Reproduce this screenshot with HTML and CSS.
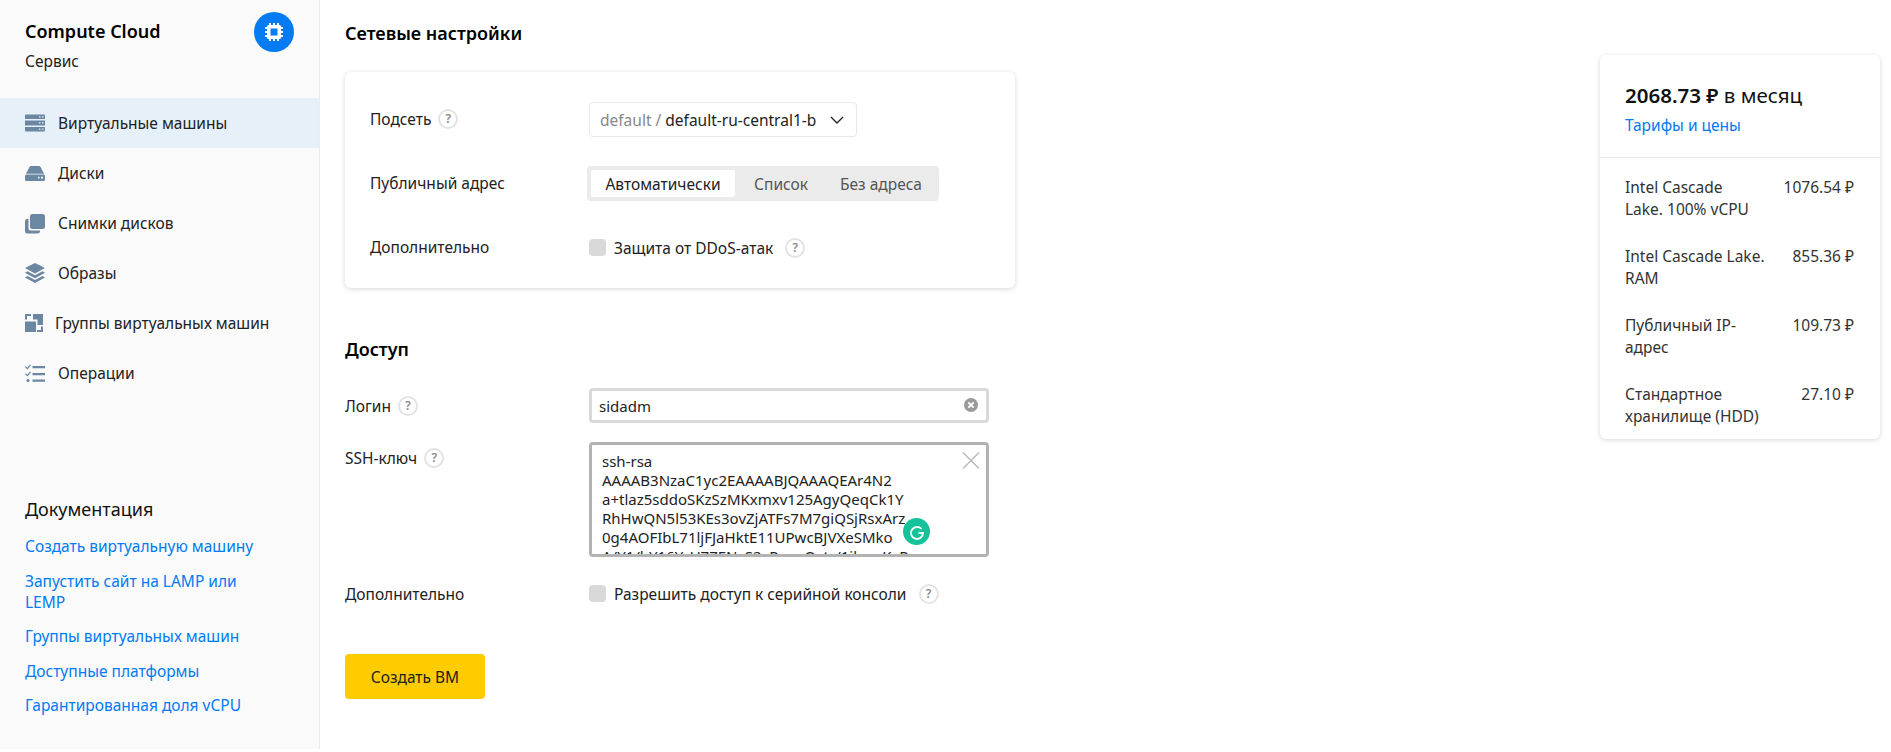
FILE: index.html
```html
<!DOCTYPE html>
<html lang="ru">
<head>
<meta charset="utf-8">
<title>Compute Cloud</title>
<link rel="stylesheet" href="styles.css">
</head>
<body>
<div class="page">
  <aside class="sidebar">
    <header class="brand">
      <div class="brand-text">
        <div class="brand-title">Compute Cloud</div>
        <div class="brand-sub">Сервис</div>
      </div>
      <div class="brand-icon">
        <svg width="20" height="20" viewBox="0 0 20 20"><path fill="#fff" fill-rule="evenodd" d="M5 1h2v2h2V1h2v2h2V1h2v2h.5A1.500 1.500 0 0 1 17 4.500V5h2v2h-2v2h2v2h-2v2h2v2h-2v.5a1.500 1.500 0 0 1-1.500 1.500H15v2h-2v-2h-2v2H9v-2H7v2H5v-2h-.5A1.500 1.500 0 0 1 3 15.500V15H1v-2h2v-2H1V9h2V7H1V5h2v-.5A1.500 1.500 0 0 1 4.500 3H5V1Zm1.500 5.500v7h7v-7h-7Z"/></svg>
      </div>
    </header>
    <nav class="nav">
      <a class="nav-item active">
        <svg class="nav-icon" viewBox="0 0 20 20"><path fill-rule="evenodd" d="M1 1.500h18a1 1 0 0 1 1 1v3.500H0V2.500a1 1 0 0 1 1-1Zm-1 6h20v5H0v-5Zm0 6.500h20v3.500a1 1 0 0 1-1 1H1a1 1 0 0 1-1-1V14ZM14 3.300v1.100h1.500V3.300H14Zm3 0v1.100h1.500V3.300H17Zm-3 6v1.200h1.500V9.300H14Zm3 0v1.200h1.500V9.300H17Zm-3 6.300v1.100h1.500v-1.100H14Zm3 0v1.100h1.500v-1.100H17Z"/></svg>
        <span>Виртуальные машины</span>
      </a>
      <a class="nav-item">
        <svg class="nav-icon" viewBox="0 0 20 20"><path fill-rule="evenodd" d="M6.500 3h7c.9 0 1.700.5 2.200 1.300L19 10.800H1l3.300-6.500C4.800 3.500 5.600 3 6.500 3ZM1.500 11.600h17a1.500 1.500 0 0 1 1.500 1.500v3.400a1.500 1.500 0 0 1-1.500 1.500h-17A1.500 1.500 0 0 1 0 16.500v-3.400a1.500 1.500 0 0 1 1.500-1.500Zm11.500 2.100v1.800h1.500v-1.800H13Zm3 0v1.800h2v-1.800h-2Z"/></svg>
        <span>Диски</span>
      </a>
      <a class="nav-item">
        <svg class="nav-icon copies" viewBox="0 0 20 20"><rect x="5" y="1" width="15" height="15" rx="2.500"/><path d="M3.500 6v9.500a2 2 0 0 0 2 2H15v.5a2.500 2.500 0 0 1-2.500 2.500h-10A2.500 2.500 0 0 1 0 18V8.500A2.500 2.500 0 0 1 3.500 6Z"/></svg>
        <span>Снимки дисков</span>
      </a>
      <a class="nav-item">
        <svg class="nav-icon" viewBox="0 0 20 20"><path d="M10 0l10 5-10 5.500L0 5l10-5Z"/><path d="M2.500 8.300 10 12.300l7.500-4L20 9.800l-10 5.400L0 9.800l2.500-1.500Z"/><path d="M2.500 13 10 17l7.500-4 2.500 1.500L10 20 0 14.500 2.500 13Z"/></svg>
        <span>Образы</span>
      </a>
      <a class="nav-item groups">
        <svg class="nav-icon small" viewBox="0 0 18 18"><path d="M8 0h10v11h-5.500V5.500H8Z"/><path d="M0 7.500h11V18H0Z"/><path d="M0 0h6v2H2v3.500H0Z"/><path d="M16 12.500h2V18h-6v-2h4Z"/></svg>
        <span>Группы виртуальных машин</span>
      </a>
      <a class="nav-item">
        <svg class="nav-icon" viewBox="0 0 20 20"><path d="M7.500 3h12.500v2.200H7.500zM7.500 10h12.500v2.200H7.500zM7.500 16.500h12.500v2.200H7.500z"/><path d="M.8 3.300 2.300 4.700 5 1.500 6 2.300 2.500 6.500 0 4.200ZM.8 10.300 2.300 11.700 5 8.500 6 9.300 2.500 13.500 0 11.200Z"/><circle cx="3" cy="17.500" r="1.600"/></svg>
        <span>Операции</span>
      </a>
    </nav>
    <section class="docs">
      <h3 class="docs-title">Документация</h3>
      <a class="docs-link">Создать виртуальную машину</a>
      <a class="docs-link">Запустить сайт на LAMP или LEMP</a>
      <a class="docs-link">Группы виртуальных машин</a>
      <a class="docs-link">Доступные платформы</a>
      <a class="docs-link">Гарантированная доля vCPU</a>
    </section>
  </aside>

  <main class="main">
    <h2 class="section-title first">Сетевые настройки</h2>
    <section class="card">
      <div class="row">
        <div class="label">Подсеть <span class="help">?</span></div>
        <div class="select"><span class="muted">default /</span>&nbsp;default-ru-central1-b
          <svg class="chevron" width="14" height="8" viewBox="0 0 14 8"><path d="M1 1l6 6 6-6" fill="none" stroke="#222" stroke-width="1.300"/></svg>
        </div>
      </div>
      <div class="row">
        <div class="label">Публичный адрес</div>
        <div class="segments">
          <span class="segment selected">Автоматически</span>
          <span class="segment">Список</span>
          <span class="segment">Без адреса</span>
        </div>
      </div>
      <div class="row">
        <div class="label">Дополнительно</div>
        <div class="check"><span class="box"></span>Защита от DDoS-атак <span class="help check-help">?</span></div>
      </div>
    </section>

    <h2 class="section-title access">Доступ</h2>
    <div class="form-row login-row">
      <div class="flabel">Логин <span class="help">?</span></div>
      <div class="input">sidadm
        <svg class="clear" width="16" height="16" viewBox="0 0 16 16"><circle cx="8" cy="8" r="7" fill="#9a9a9a"/><path d="M5.300 5.300l5.400 5.400m0-5.400l-5.400 5.400" stroke="#fff" stroke-width="1.800"/></svg>
      </div>
    </div>
    <div class="form-row ssh-row">
      <div class="flabel">SSH-ключ <span class="help">?</span></div>
      <div class="textarea">
        <div class="textarea-text">ssh-rsa
AAAAB3NzaC1yc2EAAAABJQAAAQEAr4N2
a+tlaz5sddoSKzSzMKxmxv125AgyQeqCk1Y
RhHwQN5l53KEs3ovZjATFs7M7giQSjRsxArz
0g4AOFIbL71ljFJaHktE11UPwcBJVXeSMko
A/Y1/bY16YcU77ENcS2yPzwsOvtr/1ikmzKvP</div>
        <svg class="close" width="18" height="17" viewBox="0 0 18 17"><path d="M1 .5l16 16m0-16l-16 16" stroke="#b5b5b5" stroke-width="1.200"/></svg>
        <div class="grammarly">
          <svg width="16" height="16" viewBox="0 0 16 16"><path d="M12.500 5A6 6 0 1 0 14 9H9.500" fill="none" stroke="#fff" stroke-width="1.800"/></svg>
        </div>
      </div>
    </div>
    <div class="form-row extra-row">
      <div class="flabel">Дополнительно</div>
      <div class="check"><span class="box"></span>Разрешить доступ к серийной консоли <span class="help check-help">?</span></div>
    </div>
    <button class="create">Создать ВМ</button>
  </main>

  <aside class="price">
    <div class="price-head">
      <div class="price-total"><b>2068.73 ₽</b> в месяц</div>
      <a class="price-link">Тарифы и цены</a>
    </div>
    <div class="price-list">
      <div class="price-row"><span class="price-name">Intel Cascade Lake. 100% vCPU</span><span class="price-value">1076.54 ₽</span></div>
      <div class="price-row"><span class="price-name">Intel Cascade Lake. RAM</span><span class="price-value">855.36 ₽</span></div>
      <div class="price-row"><span class="price-name">Публичный IP-адрес</span><span class="price-value">109.73 ₽</span></div>
      <div class="price-row"><span class="price-name">Стандартное хранилище (HDD)</span><span class="price-value">27.10 ₽</span></div>
    </div>
  </aside>
</div>
</body>
</html>
```

FILE: styles.css
```css
* { box-sizing: border-box; }
html, body { margin: 0; padding: 0; background: #fff; }
body {
  font-family: "Noto Sans", "Open Sans", "Liberation Sans", sans-serif;
  font-size: 15.5px;
  line-height: 20px;
  color: #222;
  height: 752px;
  overflow: hidden;
}
.page { display: flex; height: 749px; }

.sidebar {
  width: 320px;
  flex: none;
  background: #fafafa;
  border-right: 1px solid #ececec;
  display: flex;
  flex-direction: column;
  padding-top: 12px;
}
.brand { display: flex; justify-content: space-between; padding: 0 25px; height: 86px; }
.brand-title { font-size: 18px; font-weight: 600; color: #000; line-height: 22px; margin-top: 8px; }
.brand-sub { margin-top: 9px; line-height: 20px; }
.brand-icon {
  width: 40px; height: 40px; border-radius: 50%;
  background: #027bf3;
  display: flex; align-items: center; justify-content: center;
}
.nav { display: flex; flex-direction: column; }
.nav-item { height: 50px; display: flex; align-items: center; padding-left: 25px; gap: 13px; }
.nav-item.active { background: #e5f0f9; }
.nav-item.groups { gap: 12px; }
.nav-icon { width: 20px; height: 20px; fill: #6c87a2; flex: none; overflow: visible; }
.nav-icon.small { width: 18px; height: 18px; }

.docs { margin-top: auto; padding: 0 25px 33px; display: flex; flex-direction: column; gap: 13.500px; }
.docs-title { margin: 0 0 3px; font-size: 18px; font-weight: 400; color: #111; line-height: 22px; }
.docs-link { color: #027bf3; display: block; width: 240px; line-height: 21px; }

.main { width: 695px; flex: none; padding-left: 25px; }
.section-title { font-size: 18px; font-weight: 600; color: #000; margin: 0; line-height: 22px; }
.section-title.first { margin-top: 22px; }
.section-title.access { margin-top: 50px; }

.card {
  margin-top: 28px;
  width: 670px;
  height: 216px;
  background: #fff;
  border-radius: 6px;
  box-shadow: 0 1px 5px rgba(0, 0, 0, .16);
  padding: 30px 25px 0;
  display: flex;
  flex-direction: column;
  gap: 29px;
}
.row { display: flex; align-items: center; height: 35px; flex: none; }
.label { width: 219px; flex: none; display: flex; align-items: center; gap: 7px; padding-bottom: 2px; }
.help {
  width: 20px; height: 20px;
  border: 2px solid #e3e3e3;
  border-radius: 50%;
  color: #888;
  font-size: 12px;
  font-weight: 600;
  line-height: 16px;
  text-align: center;
  display: inline-block;
  background: #fff;
}
.select {
  width: 268px; height: 35px;
  border: 1px solid #e9e9e9;
  border-radius: 4px;
  padding: 0 12px 0 10px;
  display: flex; align-items: center;
  color: #222;
  white-space: nowrap;
}
.muted { color: #888; }
.chevron { margin-left: auto; }
.segments {
  margin-left: -2px;
  width: 352px; height: 35px;
  background: #ebebeb;
  border-radius: 4px;
  padding: 4px;
  display: flex;
}
.segment { display: flex; align-items: center; justify-content: center; color: #555; height: 27px; }
.segment:nth-child(2) { width: 92px; }
.segment:nth-child(3) { width: 108px; }
.segment.selected { width: 144px; background: #fff; color: #222; border-radius: 2px; }
.check { display: flex; align-items: center; }
.box { width: 17px; height: 17px; background: #d9d9d9; border-radius: 4px; margin-right: 8px; flex: none; }
.check-help { margin-left: 12px; }

.form-row { display: flex; }
.flabel { width: 244px; flex: none; display: flex; align-items: center; gap: 7px; height: 35px; }
.login-row { margin-top: 28px; }
.ssh-row { margin-top: 19px; }
.ssh-row .flabel { height: 32px; }
.extra-row { margin-top: 19px; align-items: center; }
.input {
  position: relative;
  width: 400px; height: 35px;
  border: 3px solid #d9d9d9;
  border-radius: 4px;
  padding: 0 7px;
  display: flex; align-items: center;
  background: #fff;
  font-size: 15px;
}
.clear { position: absolute; right: 7px; top: 6px; }
.textarea {
  position: relative;
  width: 400px; height: 115px;
  border: 3px solid #b3b3b3;
  border-radius: 4px;
  background: #fff;
  overflow: hidden;
}
.textarea-text {
  white-space: pre;
  line-height: 19px;
  padding: 7px 0 0 10px;
  font-size: 15px;
  color: #222;
}
.close { position: absolute; right: 6px; top: 7px; }
.grammarly {
  position: absolute;
  left: 311px; top: 73px;
  width: 27px; height: 27px;
  border-radius: 50%;
  background: #15c39a;
  display: flex; align-items: center; justify-content: center;
}
.create {
  display: block;
  margin-top: 43px;
  width: 140px; height: 45px;
  border: 0;
  border-radius: 4px;
  background: #fc0;
  font: inherit;
  color: #222;
}

.price {
  margin: 55px 0 0 585px;
  width: 280px; height: 384px;
  flex: none;
  background: #fff;
  border-radius: 6px;
  box-shadow: 0 1px 5px rgba(0, 0, 0, .16);
}
.price-head { height: 103px; padding: 27px 25px 0; border-bottom: 1px solid #ececec; }
.price-total { font-size: 20.500px; line-height: 26px; color: #111; white-space: nowrap; }
.price-total b { font-weight: 600; }
.price-link { display: block; margin-top: 6px; color: #027bf3; line-height: 22px; }
.price-list { padding: 18px 26px 0 25px; display: flex; flex-direction: column; gap: 25px; }
.price-row { display: flex; gap: 24px; line-height: 22px; color: #333; }
.price-name { flex: 1; }
.price-value { white-space: nowrap; }
```
